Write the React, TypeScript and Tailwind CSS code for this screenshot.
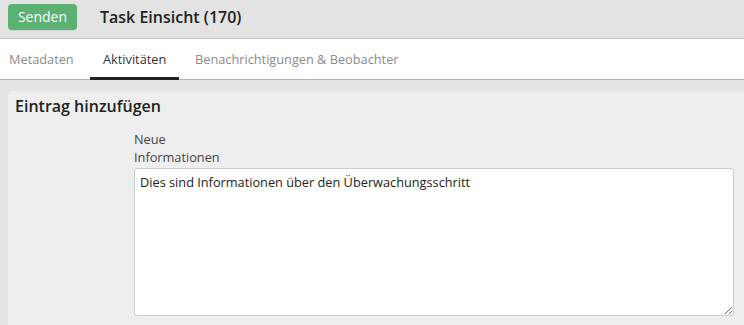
export default function App() {
  return (
    <div className="w-full h-[325px] overflow-hidden bg-[#e4e4e4] text-[#333] font-['Open_Sans','Liberation_Sans',sans-serif]">
      {/* header */}
      <div className="h-[39px] flex items-start border-b border-[#c6c6c6] bg-[#e3e3e3]">
        <button className="ml-2 mt-1 w-[69px] h-[26px] rounded-[4px] bg-[#5bb074] text-white text-[14px] leading-[26px] shadow-[0_1px_1px_rgba(0,0,0,0.08)]">
          Senden
        </button>
        <h1 className="ml-[23px] mt-[5px] text-[16px] leading-[24px] font-semibold text-[#222]">
          Task Einsicht (170)
        </h1>
      </div>

      {/* tabs */}
      <div className="h-[41px] flex bg-white border-b border-[#b4b4b4] text-[12.75px]">
        <div className="pl-[9px] w-[90px] leading-[41px] text-[#8a8a8a]">Metadaten</div>
        <div className="h-[41px] w-[89px] px-[13px] leading-[41px] text-[#333] shadow-[inset_0_-3px_0_#222]">
          Aktivitäten
        </div>
        <div className="ml-4 leading-[41px] text-[#8a8a8a]">Benachrichtigungen &amp; Beobachter</div>
      </div>

      {/* body */}
      <div className="pt-[11px] pl-2">
        <div className="bg-[#eeeeee] rounded-tl-[4px] h-[300px] pt-[5px]">
          <h2 className="pl-[7px] text-[16px] leading-[20px] font-semibold text-[#222]">Eintrag hinzufügen</h2>
          <div className="ml-[126px] mt-[14px]">
            <label className="block w-[90px] text-[12.75px] leading-[18px] text-[#444]">Neue Informationen</label>
            <textarea
              defaultValue="Dies sind Informationen über den Überwachungsschritt"
              className="mt-[2px] block w-[600px] h-[148px] bg-white border border-[#cccccc] rounded-[3px] px-[5px] py-[4px] text-[12.75px] leading-[18px] text-[#222] outline-none"
            />
          </div>
        </div>
      </div>
    </div>
  );
}
